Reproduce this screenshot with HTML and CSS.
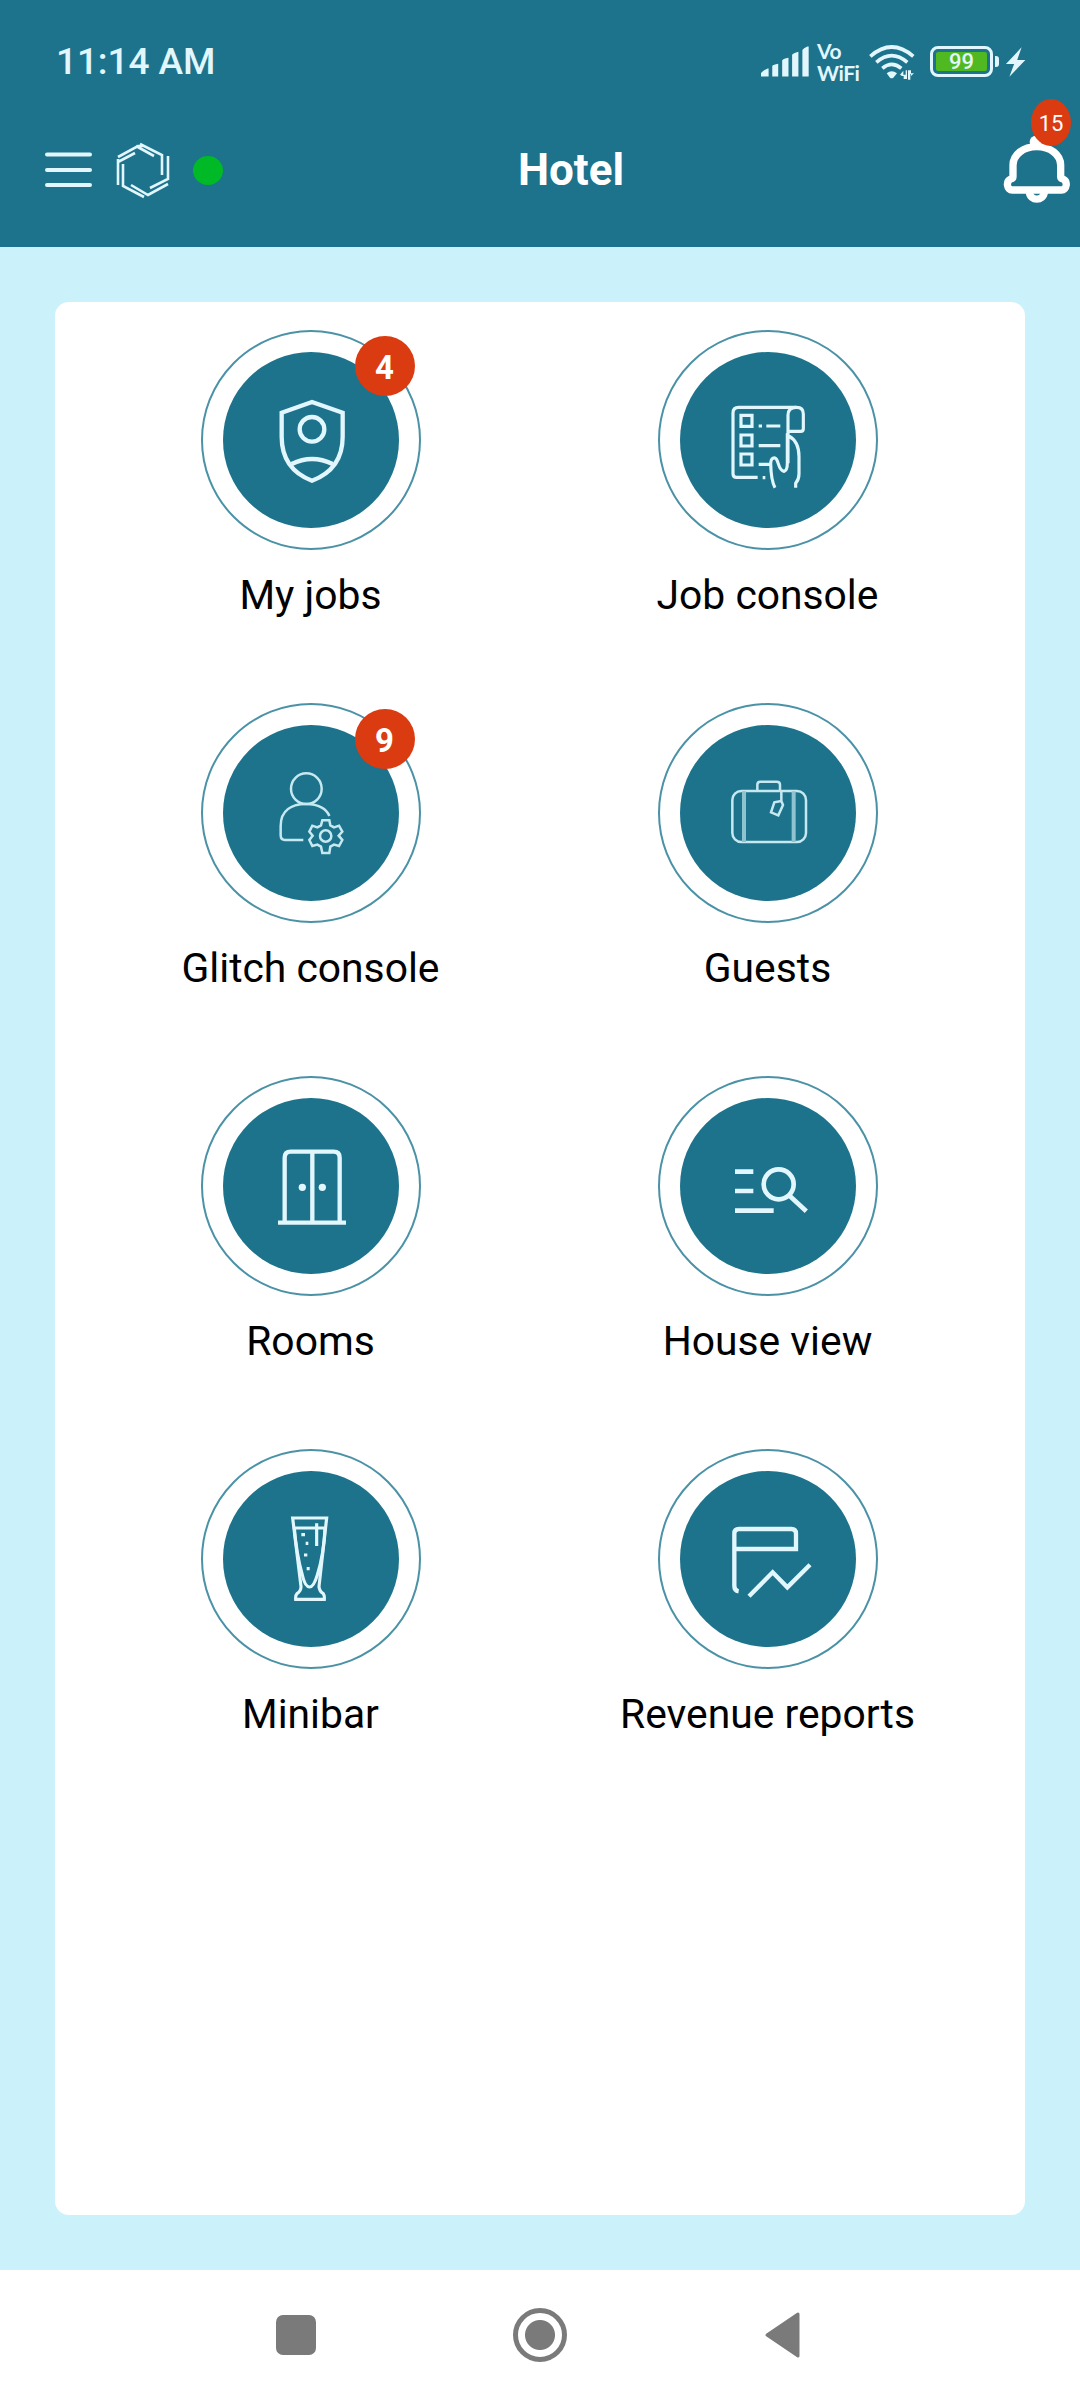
FILE: index.html
```html
<!DOCTYPE html>
<html lang="en">
<head>
  <meta charset="UTF-8" />
  <title>Hotel</title>
  <meta name="viewport" content="width=device-width, initial-scale=1.0" />
  <link rel="stylesheet" href="styles.css">
</head>
<body>

  <header>
    <div class="status-bar">
      <time>11:14 AM</time>

      <div class="status-icons">
        <svg class="signal" viewBox="60 76 145 93">
          <path d="M60 168V158Q62 152 80 144H83V168ZM94 168V136Q97 131 112 129V168ZM124 168V119Q128 113 143 111V168ZM154 168V102Q157 97 173 93V168ZM185 168V88Q188 82 200 77H204V168Z" />
        </svg>
        <div class="vowifi">
          <span>Vo</span>
          <span>WiFi</span>
        </div>
        <svg class="wifi" viewBox="384 68 144 108">
          <g class="waves">
            <path d="M391 105Q455 49 520 105" />
            <path d="M409 123Q455 83 502 123" />
            <path d="M427 141Q455 117 484 141" />
          </g>
          <path d="M440 156Q455 144 471 156L460 169Q455 173 450 169ZM480 160L490 148V160H497V147H501V173H491V164H486ZM504 147H513V156H522L513 164V158H511V175H504Z" />
        </svg>
        <div class="battery"><span>99</span></div>
        <svg class="bolt" viewBox="796 78 60 88">
          <path d="M844 79L798 128H822L808 165L855 116H831Z" />
        </svg>
      </div>
    </div>

    <div class="app-bar">
      <svg class="menu" viewBox="0 0 48 36">
        <path d="M2 2.500H45M2 18H45M2 33H45" />
      </svg>
      <svg class="hexagon" viewBox="0 0 54 56">
        <path d="M2 15L22 4L27 4M2 20L19 11M24 2L46 13V33M20 4L38 14M52 14V37L34 46M52 42L32 53L15 43M2 17V43M7 22V44L28 55" />
      </svg>
      <span class="online"></span>
      <h1>Hotel</h1>
      <div class="bell">
        <svg viewBox="788 340 204 210">
          <circle cx="886" cy="366" r="18" />
          <path d="M818 437C818 405 849 381 889 381C930 381 961 405 961 437V471Q961 476 968 478C983 485 980 511 963 511H816C799 511 796 485 811 478Q818 476 818 471Z" />
          <path d="M867 518C870 545 909 545 912 518" />
        </svg>
        <span class="bell-count">15</span>
      </div>
    </div>
  </header>

  <main>
    <section class="menu-grid">
      <a class="tile">
        <div class="ring">
          <div class="disc">
            <svg viewBox="99 96 528 528">
              <path d="M366 246L458 278V350Q458 447 366 482Q275 447 275 350V278Z" />
              <circle cx="366" cy="328" r="37" />
              <path d="M305 432Q366 402 428 432" />
            </svg>
          </div>
          <span class="badge">4</span>
        </div>
        <span class="label">My jobs</span>
      </a>

      <a class="tile">
        <div class="ring">
          <div class="disc">
            <svg class="thin" viewBox="90 96 528 528">
              <path d="M323 472H260Q249 472 249 461V279Q249 262 266 262H440Q460 262 460 282V326Q460 334 452 334H414" />
              <path d="M414 430V286Q414 262 438 262M416 348Q447 364 447 410V462Q447 478 437 490V503" />
              <path d="M375 503Q363 482 362 430Q363 412 375 414C387 418 383 451 402 454Q412 452 412 430V340" />
              <path d="M273 286H306V319H273ZM273 345H306V378H273ZM273 402H306V435H273Z" />
              <path d="M326 318H336M349 318H391M326 377H391M326 433H361M338 473H346" />
            </svg>
          </div>
        </div>
        <span class="label">Job console</span>
      </a>

      <a class="tile">
        <div class="ring">
          <div class="disc">
            <svg class="thin faint" viewBox="159 105 528 528">
              <circle cx="409" cy="296" r="46" />
              <path d="M400 450H345Q332 450 332 436V408C332 360 366 342 409 342C445 342 470 357 478 378" />
              <path d="M457 391H478L481 406L492 412L507 407L517 425L506 437L517 450L507 468L492 464L481 470L478 489H457L453 470L442 464L427 468L418 450L428 437L418 425L427 407L442 412L453 406Z" />
              <circle cx="467" cy="438" r="17" />
            </svg>
          </div>
          <span class="badge">9</span>
        </div>
        <span class="label">Glitch console</span>
      </a>

      <a class="tile">
        <div class="ring">
          <div class="disc">
            <svg class="thin faint" viewBox="90 105 528 528">
              <rect x="247" y="303" width="221" height="153" rx="27" />
              <path d="M322 302V284Q322 275 331 275H380Q390 275 390 284V302" />
              <path class="strap" d="M282 304V456M431 304V456" />
              <path d="M394 302V333L399 345L385 376L363 367L373 337L394 333" />
            </svg>
          </div>
        </div>
        <span class="label">Guests</span>
      </a>

      <a class="tile">
        <div class="ring">
          <div class="disc">
            <svg viewBox="99 99 528 528">
              <path d="M284 472V278Q284 260 302 260H431Q449 260 449 278V472M367 260V472M264 473H468" />
              <circle class="dot" cx="337" cy="367" r="11" />
              <circle class="dot" cx="397" cy="367" r="11" />
            </svg>
          </div>
        </div>
        <span class="label">Rooms</span>
      </a>

      <a class="tile">
        <div class="ring">
          <div class="disc">
            <svg class="bold" viewBox="90 99 528 528">
              <path d="M255 320H310M255 378H310M255 437H371M417 391L469 439" />
              <circle cx="386" cy="358" r="45" />
            </svg>
          </div>
        </div>
        <span class="label">House view</span>
      </a>

      <a class="tile">
        <div class="ring">
          <div class="disc">
            <svg class="thin" viewBox="99 93 528 528">
              <path d="M308 234H410L387 440Q388 454 400 461Q404 466 403 478H317Q316 466 321 461Q333 453 333 440Z" />
              <path d="M313 264H405Q402 340 382 405Q371 441 359 441Q345 441 337 405Q319 340 313 264Z" />
              <path d="M380 250V318M334 284H345M347 310H355M342 345H352M350 386H359" />
            </svg>
          </div>
        </div>
        <span class="label">Minibar</span>
      </a>

      <a class="tile">
        <div class="ring">
          <div class="disc">
            <svg viewBox="210 93 528 528">
              <path d="M386 454Q373 452 373 438V281Q373 267 387 267H544Q558 267 558 281V327H373" />
              <path d="M417 469L488 397L532 442L600 374" />
            </svg>
          </div>
        </div>
        <span class="label">Revenue reports</span>
      </a>
    </section>
  </main>

  <nav>
    <span class="recents"></span>
    <span class="home"></span>
    <svg class="back" viewBox="0 0 37 46">
      <path d="M34 2V44L3 23Z" />
    </svg>
  </nav>

</body>
</html>
```
FILE: styles.css
```css
* {
  box-sizing: border-box;
}

body {
  --teal: #1c738b;
  --sky: #cbf2fb;
  --red: #da3b11;
  --ice: #e2f6fd;
  --gray: #7a7a7a;

  display: flex;
  flex-direction: column;
  height: 2400px;
  margin: 0;
  background-color: #fff;
  font-family: Roboto, sans-serif;
}

svg {
  display: block;
  overflow: visible;
}

header {
  height: 247px;
  background-color: var(--teal);
}

/* status bar */
.status-bar {
  display: flex;
  justify-content: space-between;
  align-items: center;
  height: 93px;
  padding: 30px 54px 0 56px;
  color: var(--ice);

  time {
    font-weight: 500;
    font-size: 37px;
    letter-spacing: -0.1px;
    line-height: 1;
  }
}

.status-icons {
  display: flex;
  align-items: center;
  fill: var(--ice);
}

.signal {
  width: 48px;
  height: 31px;
}

.vowifi {
  display: flex;
  flex-direction: column;
  gap: 2px;
  width: 43px;
  margin-left: 8px;
  font-family: Lato, sans-serif;
  font-weight: 700;
  font-size: 21px;
  letter-spacing: -0.5px;

  span {
    height: 20px;
    line-height: 20px;
  }
}

.wifi {
  width: 48px;
  height: 36px;
  margin-left: 8px;

  .waves {
    fill: none;
    stroke: var(--ice);
    stroke-width: 11;
  }
}

.battery {
  position: relative;
  width: 63px;
  height: 31px;
  margin-left: 14px;
  padding: 3px;
  border: 3px solid var(--ice);
  border-radius: 8px;

  span {
    display: block;
    height: 19px;
    border-radius: 2px;
    background-color: #50b922;
    font-weight: 500;
    font-size: 22px;
    line-height: 20px;
    text-align: center;
  }

  &::after {
    content: '';
    position: absolute;
    top: 7px;
    right: -9px;
    width: 4px;
    height: 11px;
    border-radius: 0 3px 3px 0;
    background-color: var(--ice);
  }
}

.bolt {
  width: 21px;
  height: 30px;
  margin-left: 12px;
}

/* app bar */
.app-bar {
  display: flex;
  align-items: center;
  height: 154px;
  padding: 0 9px 0 45px;

  h1 {
    flex: 1;
    margin: 0 84px 0 0;
    color: #fff;
    font-weight: 700;
    font-size: 44px;
    line-height: 1;
    text-align: center;
  }
}

.menu {
  width: 48px;
  height: 36px;
  fill: none;
  stroke: var(--ice);
  stroke-width: 4;
  stroke-linecap: round;
}

.hexagon {
  width: 54px;
  height: 56px;
  margin-left: 23px;
  fill: none;
  stroke: var(--ice);
  stroke-width: 2.6;
}

.online {
  width: 30px;
  height: 29px;
  margin-left: 23px;
  border-radius: 50%;
  background-color: #00b927;
}

.bell {
  position: relative;
  margin-bottom: 4px;

  svg {
    width: 68px;
    height: 70px;
    fill: none;
    stroke: #fff;
    stroke-width: 22;
  }

  circle {
    fill: #fff;
    stroke: none;
  }
}

.bell-count {
  position: absolute;
  top: -34px;
  right: 0;
  width: 40px;
  height: 47px;
  border-radius: 50%;
  background-color: var(--red);
  color: #fff;
  font-size: 22px;
  line-height: 50px;
  text-align: center;
}

/* content */
main {
  flex: 1;
  padding: 55px;
  background-color: var(--sky);
}

.menu-grid {
  display: grid;
  grid-template-columns: 1fr 1fr;
  grid-auto-rows: 373px;
  height: 100%;
  padding: 28px 29px 0 27px;
  border-radius: 14px;
  background-color: #fff;
}

.tile {
  display: flex;
  flex-direction: column;
  align-items: center;
}

.ring {
  position: relative;
  display: grid;
  place-items: center;
  width: 220px;
  height: 220px;
  border: 2px solid #4b92a7;
  border-radius: 50%;
}

.disc {
  width: 176px;
  height: 176px;
  border-radius: 50%;
  background-color: var(--teal);

  svg {
    fill: none;
    stroke: var(--ice);
    stroke-width: 13;
  }

  .thin { stroke-width: 9.500; }
  .faint { stroke: #c6e9f1; stroke-width: 7.500; }
  .bold { stroke-width: 14; }
  .strap { stroke: #8fc3d0; stroke-width: 12; }
  .dot { fill: var(--ice); stroke: none; }
}

.badge {
  position: absolute;
  top: 4px;
  left: 152px;
  width: 60px;
  height: 60px;
  border-radius: 50%;
  background-color: var(--red);
  color: #fff;
  font-weight: 700;
  font-size: 33px;
  line-height: 63px;
  text-align: center;
}

.label {
  margin-top: 21px;
  color: #000;
  font-size: 40.800px;
  line-height: 48px;
}

/* system navigation */
nav {
  display: flex;
  justify-content: center;
  align-items: center;
  gap: 197px;
  height: 130px;
  padding-right: 4px;
}

.recents {
  width: 40px;
  height: 40px;
  border-radius: 7px;
  background-color: var(--gray);
}

.home {
  width: 54px;
  height: 54px;
  border: 5px solid var(--gray);
  border-radius: 50%;
  background: radial-gradient(circle, var(--gray) 14.500px, transparent 15.500px);
}

.back {
  width: 37px;
  height: 46px;
  fill: var(--gray);
  stroke: var(--gray);
  stroke-width: 3;
  stroke-linejoin: round;
}
```
